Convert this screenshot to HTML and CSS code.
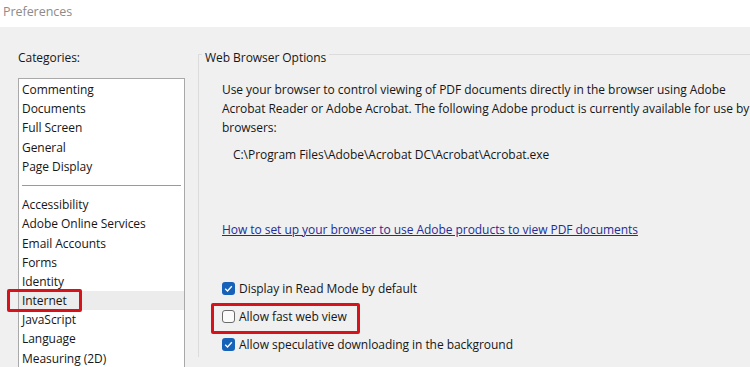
FILE: index.html
```html
<!DOCTYPE html>
<html lang="en">
<head>
<meta charset="utf-8">
<title>Preferences</title>
<link rel="stylesheet" href="styles.css">
</head>
<body>
<div class="titlebar">Preferences</div>
<div class="main">
  <div class="left">
    <div class="cat-label">Categories:</div>
    <ul class="list">
      <li>Commenting</li>
      <li>Documents</li>
      <li>Full Screen</li>
      <li>General</li>
      <li>Page Display</li>
      <li class="sep"></li>
      <li>Accessibility</li>
      <li>Adobe Online Services</li>
      <li>Email Accounts</li>
      <li>Forms</li>
      <li>Identity</li>
      <li class="selected">Internet<span class="mark mark-internet"></span></li>
      <li>JavaScript</li>
      <li>Language</li>
      <li>Measuring (2D)</li>
    </ul>
  </div>
  <fieldset class="group">
    <legend class="group-title">Web Browser Options</legend>
    <p class="desc">Use your browser to control viewing of PDF documents directly in the browser using Adobe Acrobat Reader or Adobe Acrobat. The following Adobe product is currently available for use by browsers:</p>
    <p class="path">C:\Program Files\Adobe\Acrobat DC\Acrobat\Acrobat.exe</p>
    <a class="link" href="#">How to set up your browser to use Adobe products to view PDF documents</a>
    <div class="checks">
      <label class="check"><span class="box on"><svg viewBox="0 0 13 13" width="13" height="13"><path d="M3.2 6.8 L5.5 9 L9.8 4.2" fill="none" stroke="#fff" stroke-width="1.3"/></svg></span>Display in Read Mode by default</label>
      <label class="check"><span class="box"></span>Allow fast web view<span class="mark mark-fast"></span></label>
      <label class="check"><span class="box on"><svg viewBox="0 0 13 13" width="13" height="13"><path d="M3.2 6.8 L5.5 9 L9.8 4.2" fill="none" stroke="#fff" stroke-width="1.3"/></svg></span>Allow speculative downloading in the background</label>
    </div>
  </fieldset>
</div>
</body>
</html>
```

FILE: styles.css
```css
html, body {
  margin: 0;
  padding: 0;
}
body {
  width: 750px;
  height: 367px;
  overflow: hidden;
  background: #f0f0f0;
  font-family: "Open Sans", "Noto Sans", sans-serif;
  font-size: 12px;
  letter-spacing: -0.05px;
  color: #161616;
}
.titlebar {
  height: 27px;
  background: #ffffff;
  color: #8c8c8c;
  font-size: 12.5px;
  line-height: 24px;
  padding-left: 3px;
}
.main {
  display: flex;
  align-items: flex-start;
  padding-top: 21px;
}
.left {
  margin-left: 18px;
  width: 167px;
  flex: none;
}
.cat-label {
  line-height: 19px;
}
.list {
  list-style: none;
  margin: 11px 0 0 0;
  padding: 1px 0 0 0;
  background: #ffffff;
  border: 1px solid #a9a9a9;
  border-bottom: none;
  height: 290px;
}
.list li {
  position: relative;
  height: 19.2px;
  line-height: 19.2px;
  padding-left: 3px;
}
.list li.sep {
  display: flex;
  align-items: center;
  padding: 0 3px;
}
.list li.sep::after {
  content: "";
  flex: 1;
  height: 1px;
  background: #7fa2b6;
}
.list li.selected {
  background: #ececec;
}
.mark {
  position: absolute;
  border: 3px solid #d6131b;
  border-radius: 2px;
  box-sizing: border-box;
  pointer-events: none;
}
.mark-internet {
  left: -12px;
  top: -2px;
  width: 75px;
  height: 23px;
}
.group {
  margin: -5.5px 0 0 13px;
  padding: 13px 0 0 23px;
  border: none;
  border-top: 1px solid #dcdcdc;
  border-left: 1px solid #dcdcdc;
  min-width: 0;
  flex: 1;
  height: 300px;
}
.group-title {
  padding: 5px 3px 0 3px;
  margin-left: -20px;
  line-height: 19px;
}
.desc {
  margin: 0;
  line-height: 19px;
}
.path {
  margin: 8px 0 0 11px;
  line-height: 19px;
}
.link {
  display: block;
  margin-top: 56px;
  line-height: 19px;
  color: #232c97;
  text-decoration: underline;
  width: max-content;
}
.checks {
  margin-top: 40px;
  display: flex;
  flex-direction: column;
  gap: 9.2px;
}
.check {
  position: relative;
  display: flex;
  align-items: center;
  gap: 4px;
  line-height: 19px;
}
.box {
  width: 13px;
  height: 13px;
  box-sizing: border-box;
  border: 1px solid #6b6b6b;
  border-radius: 3px;
  background: #fbfbfb;
  flex: none;
  display: flex;
}
.box.on {
  border: none;
  background: #1762b9;
}
.mark-fast {
  left: -11px;
  top: -4px;
  width: 149px;
  height: 31px;
}
```
